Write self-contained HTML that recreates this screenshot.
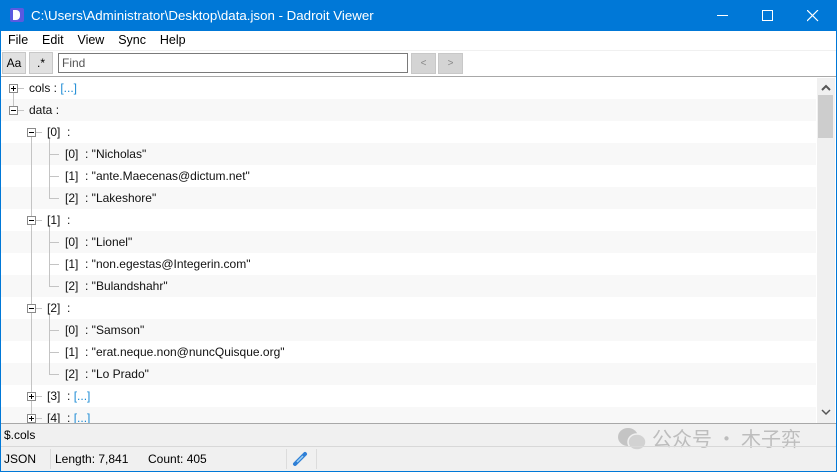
<!DOCTYPE html><html><head><style>
*{margin:0;padding:0;box-sizing:border-box}
body{width:837px;height:472px;overflow:hidden;background:#f0f0f0;font-family:"Segoe UI","Liberation Sans",sans-serif;font-size:12px;color:#000;position:relative}
.a{position:absolute}
.row{position:absolute;left:1px;width:815px;height:22px}
.t{position:absolute;line-height:22px;white-space:nowrap;color:#111}
.b{color:#1a8ad4}
.box{position:absolute;width:9px;height:9px;border:1px solid #8a8a8a;background:#fff}
.box:before{content:"";position:absolute;left:1px;top:3px;width:5px;height:1px;background:#000}
.p:after{content:"";position:absolute;left:3px;top:1px;width:1px;height:5px;background:#000}
.vl{position:absolute;width:1px;background:#c4c4c4}
.hl{position:absolute;height:1px;background:#c4c4c4}
</style></head><body>
<div class="a" style="left:0;top:0;width:837px;height:31px;background:#0078d7"></div>
<div class="a" style="left:10px;top:8px;width:14px;height:14px;background:#5a5ae0;border-radius:2px"></div>
<div class="a" style="left:13px;top:10px;width:7px;height:10px;background:#fff;border-radius:0 4px 4px 0"></div>
<div class="a" style="left:31px;top:0;line-height:31px;color:#fff;font-size:13.3px">C:\Users\Administrator\Desktop\data.json - Dadroit Viewer</div>
<div class="a" style="left:717px;top:15px;width:11px;height:1px;background:#fff"></div>
<div class="a" style="left:762px;top:10px;width:11px;height:11px;border:1px solid #fff"></div>
<svg class="a" style="left:807px;top:10px" width="12" height="12"><path d="M0 0L11 11M11 0L0 11" stroke="#fff" stroke-width="1.2"/></svg>
<div class="a" style="left:0;top:31px;width:837px;height:19px;background:#fff"></div>
<div class="a" style="left:8px;top:31px;line-height:19px;font-size:12.5px;word-spacing:0">File&nbsp;&nbsp;&nbsp; Edit&nbsp;&nbsp;&nbsp; View&nbsp;&nbsp;&nbsp; Sync&nbsp;&nbsp;&nbsp; Help</div>
<div class="a" style="left:0;top:51px;width:837px;height:25px;background:#fff"></div>
<div class="a" style="left:2px;top:52px;width:24px;height:22px;background:#e1e1e1;border:1px solid #c8c8c8;text-align:center;line-height:20px">Aa</div>
<div class="a" style="left:29px;top:52px;width:24px;height:22px;background:#e1e1e1;border:1px solid #c8c8c8;text-align:center;line-height:20px">.*</div>
<div class="a" style="left:58px;top:53px;width:350px;height:20px;border:1px solid #7a7a7a;background:#fff;padding-left:3px;line-height:18px;color:#555">Find</div>
<div class="a" style="left:411px;top:53px;width:25px;height:21px;background:#d4d4d4;border:1px solid #c8c8c8;text-align:center;line-height:19px;color:#888;font-size:10px">&lt;</div>
<div class="a" style="left:438px;top:53px;width:25px;height:21px;background:#d4d4d4;border:1px solid #c8c8c8;text-align:center;line-height:19px;color:#888;font-size:10px">&gt;</div>
<div class="a" style="left:0;top:76px;width:837px;height:348px;background:#fff;border-top:1px solid #a8a8a8;border-bottom:1px solid #a8a8a8"></div>
<div class="row" style="top:99px;background:#f8f8f8"></div>
<div class="row" style="top:143px;background:#f8f8f8"></div>
<div class="row" style="top:187px;background:#f8f8f8"></div>
<div class="row" style="top:231px;background:#f8f8f8"></div>
<div class="row" style="top:275px;background:#f8f8f8"></div>
<div class="row" style="top:319px;background:#f8f8f8"></div>
<div class="row" style="top:363px;background:#f8f8f8"></div>
<div class="row" style="top:407px;height:16px;background:#f8f8f8"></div>
<div class="vl" style="left:13px;top:92px;height:14px"></div>
<div class="vl" style="left:31px;top:136px;height:287px"></div>
<div class="vl" style="left:49px;top:137px;height:62px"></div>
<div class="vl" style="left:49px;top:225px;height:62px"></div>
<div class="vl" style="left:49px;top:313px;height:62px"></div>
<div class="hl" style="left:18px;top:88px;width:6px"></div><div class="hl" style="left:18px;top:110px;width:6px"></div>
<div class="hl" style="left:36px;top:132px;width:6px"></div><div class="hl" style="left:36px;top:220px;width:6px"></div><div class="hl" style="left:36px;top:308px;width:6px"></div><div class="hl" style="left:36px;top:396px;width:6px"></div><div class="hl" style="left:36px;top:418px;width:6px"></div>
<div class="hl" style="left:49px;top:154px;width:10px"></div><div class="hl" style="left:49px;top:176px;width:10px"></div><div class="hl" style="left:49px;top:198px;width:10px"></div>
<div class="hl" style="left:49px;top:242px;width:10px"></div><div class="hl" style="left:49px;top:264px;width:10px"></div><div class="hl" style="left:49px;top:286px;width:10px"></div>
<div class="hl" style="left:49px;top:330px;width:10px"></div><div class="hl" style="left:49px;top:352px;width:10px"></div><div class="hl" style="left:49px;top:374px;width:10px"></div>
<div class="box p" style="left:9px;top:84px"></div>
<div class="box" style="left:9px;top:106px"></div>
<div class="box" style="left:27px;top:128px"></div>
<div class="box" style="left:27px;top:216px"></div>
<div class="box" style="left:27px;top:304px"></div>
<div class="box p" style="left:27px;top:392px"></div>
<div class="box p" style="left:27px;top:414px"></div>
<div class="t" style="left:29px;top:77px">cols : <span class="b">[...]</span></div>
<div class="t" style="left:29px;top:99px">data :</div>
<div class="t" style="left:47px;top:121px">[0]&nbsp; :</div>
<div class="t" style="left:65px;top:143px">[0]&nbsp; : "Nicholas"</div>
<div class="t" style="left:65px;top:165px">[1]&nbsp; : "ante.Maecenas@dictum.net"</div>
<div class="t" style="left:65px;top:187px">[2]&nbsp; : "Lakeshore"</div>
<div class="t" style="left:47px;top:209px">[1]&nbsp; :</div>
<div class="t" style="left:65px;top:231px">[0]&nbsp; : "Lionel"</div>
<div class="t" style="left:65px;top:253px">[1]&nbsp; : "non.egestas@Integerin.com"</div>
<div class="t" style="left:65px;top:275px">[2]&nbsp; : "Bulandshahr"</div>
<div class="t" style="left:47px;top:297px">[2]&nbsp; :</div>
<div class="t" style="left:65px;top:319px">[0]&nbsp; : "Samson"</div>
<div class="t" style="left:65px;top:341px">[1]&nbsp; : "erat.neque.non@nuncQuisque.org"</div>
<div class="t" style="left:65px;top:363px">[2]&nbsp; : "Lo Prado"</div>
<div class="t" style="left:47px;top:385px">[3]&nbsp; : <span class="b">[...]</span></div>
<div class="a" style="left:0;top:407px;width:837px;height:16px;overflow:hidden"><div class="t" style="left:47px;top:0">[4]&nbsp; : <span class="b">[...]</span></div></div>
<div class="a" style="left:817px;top:78px;width:18px;height:345px;background:#f0f0f0"></div>
<div class="a" style="left:818px;top:95px;width:15px;height:43px;background:#cdcdcd"></div>
<svg class="a" style="left:821px;top:84px" width="10" height="8"><path d="M1 6L5 2L9 6" stroke="#555" stroke-width="2" fill="none"/></svg>
<svg class="a" style="left:821px;top:408px" width="10" height="8"><path d="M1 2L5 6L9 2" stroke="#555" stroke-width="1.5" fill="none"/></svg>
<div class="a" style="left:4px;top:424px;line-height:22px">$.cols</div>
<svg class="a" style="left:616px;top:425px" width="32" height="28"><ellipse cx="12" cy="12" rx="10" ry="9" fill="#c4c4c4"/><ellipse cx="21" cy="17" rx="9" ry="8" fill="#d2d2d2" stroke="#f0f0f0" stroke-width="1.5"/></svg>
<div class="a" style="left:652px;top:423px;line-height:30px;font-size:20px;color:#bdbdbd;font-family:'Noto Sans CJK SC',sans-serif">公众号 · 木子弈</div>
<div class="a" style="left:0;top:446px;width:837px;height:1px;background:#d8d8d8"></div>
<div class="a" style="left:4px;top:448px;line-height:22px">JSON</div>
<div class="a" style="left:50px;top:449px;width:1px;height:20px;background:#dcdcdc"></div>
<div class="a" style="left:55px;top:448px;line-height:22px">Length: 7,841</div>
<div class="a" style="left:148px;top:448px;line-height:22px">Count: 405</div>
<div class="a" style="left:286px;top:449px;width:1px;height:20px;background:#dcdcdc"></div>
<div class="a" style="left:316px;top:449px;width:1px;height:20px;background:#dcdcdc"></div>
<svg class="a" style="left:292px;top:451px" width="16" height="16"><path d="M3 13L13 3" stroke="#2f7fd6" stroke-width="4" stroke-linecap="round"/><path d="M5 11L11 5" stroke="#9cd0f5" stroke-width="1.5"/></svg>
<div class="a" style="left:0;top:0;width:1px;height:472px;background:#0078d7"></div>
<div class="a" style="left:836px;top:0;width:1px;height:472px;background:#0078d7"></div>
<div class="a" style="left:0;top:471px;width:837px;height:1px;background:#0078d7"></div>
</body></html>
